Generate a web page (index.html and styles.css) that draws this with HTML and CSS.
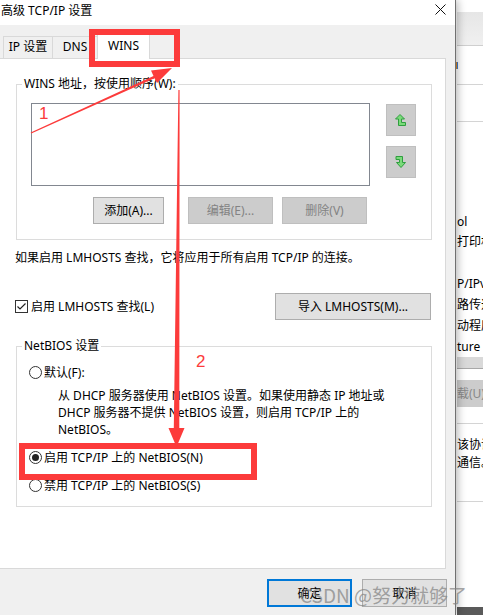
FILE: index.html
```html
<!DOCTYPE html>
<html lang="zh-CN">
<head>
<meta charset="utf-8">
<title>高级 TCP/IP 设置</title>
<link rel="stylesheet" href="styles.css">
</head>
<body>
<div class="screen">
  <div class="dialog">
    <div class="titlebar">
      <span class="title">高级 TCP/IP 设置</span>
      <svg class="close" width="11" height="11" viewBox="0 0 11 11"><path d="M0.5 0.5L10.5 10.5M10.5 0.5L0.5 10.5" stroke="#111" stroke-width="1" fill="none"/></svg>
    </div>
    <div class="tabbar">
      <div class="tab tab-ip">IP 设置</div>
      <div class="tab tab-dns">DNS</div>
      <div class="tab tab-wins active">WINS</div>
    </div>
    <div class="panel">
      <fieldset class="group group-wins">
        <legend>WINS 地址，按使用顺序(W):</legend>
        <div class="list-row">
          <div class="listbox"></div>
          <div class="order-btns">
            <div class="order-btn">
              <svg width="12" height="12" viewBox="0 0 12 12"><polygon points="5,0.5 9.5,5 6.5,5 6.5,8.5 10.5,8.5 10.5,11.5 3.5,11.5 3.5,5 0.5,5" fill="#7ada7a" stroke="#2f9e3f" stroke-width="1" stroke-linejoin="miter"/></svg>
            </div>
            <div class="order-btn">
              <svg width="12" height="12" viewBox="0 0 12 12"><polygon points="1,0.5 7.5,0.5 7.5,6.5 10.5,6.5 6,11.5 1.5,6.5 4.5,6.5 4.5,3.5 1,3.5" fill="#7ada7a" stroke="#2f9e3f" stroke-width="1" stroke-linejoin="miter"/></svg>
            </div>
          </div>
        </div>
        <div class="btn-row">
          <div class="btn btn-add">添加(A)...</div>
          <div class="btn disabled btn-edit">编辑(E)...</div>
          <div class="btn disabled btn-del">删除(V)</div>
        </div>
      </fieldset>
      <p class="note">如果启用 LMHOSTS 查找，它将应用于所有启用 TCP/IP 的连接。</p>
      <div class="lm-row">
        <div class="check">
          <span class="checkbox"><svg width="11" height="11" viewBox="0 0 11 11"><path d="M1.5 5.5L4 8L9.5 2.5" stroke="#222" stroke-width="1.2" fill="none"/></svg></span>
          <span>启用 LMHOSTS 查找(L)</span>
        </div>
        <div class="btn btn-import">导入 LMHOSTS(M)...</div>
      </div>
      <fieldset class="group group-netbios">
        <legend>NetBIOS 设置</legend>
        <div class="radio-row r-default"><span class="radio"></span><span>默认(F):</span></div>
        <p class="desc">从 DHCP 服务器使用 NetBIOS 设置。如果使用静态 IP 地址或<br>DHCP 服务器不提供 NetBIOS 设置，则启用 TCP/IP 上的<br>NetBIOS。</p>
        <div class="radio-row r-on"><span class="radio checked"></span><span>启用 TCP/IP 上的 NetBIOS(N)</span></div>
        <div class="radio-row r-off"><span class="radio"></span><span>禁用 TCP/IP 上的 NetBIOS(S)</span></div>
      </fieldset>
    </div>
    <div class="footer">
      <div class="btn btn-ok">确定</div>
      <div class="btn btn-cancel">取消</div>
    </div>
  </div>
  <div class="bgwin">
    <div class="bw-top"></div>
    <div class="bw-band"></div>
    <div class="bw-item bw-item1"><span class="bw-icon"></span></div>
    <div class="bw-item bw-item2"></div>
    <div class="bw-text bw-t1">ol<br>打印机</div>
    <div class="bw-text bw-t2">P/IPv4<br>路传递<br>动程序<br>ture</div>
    <div class="bw-grayband"></div>
    <div class="bw-btn">载(U)</div>
    <div class="bw-sep"></div>
    <div class="bw-text bw-t3">该协议<br>通信。</div>
    <div class="bw-sep2"></div>
    <div class="bw-bottom"></div>
  </div>
</div>
<svg class="annot" width="483" height="615" viewBox="0 0 483 615">
  <rect x="92" y="32" width="85" height="32" fill="none" stroke="#fc3b3b" stroke-width="6"/>
  <rect x="22" y="446" width="232" height="31" fill="none" stroke="#fc3b3b" stroke-width="6"/>
  <polygon points="30.7,132.4 153.5,76 151,70.5 172,68 157,83 154.5,78.2 31.3,133.6" fill="#fc3b3b"/>
  <polygon points="178.4,90 179.6,90 179.3,428 184.5,428 176.5,447 168.5,428 173.8,428" fill="#fc3b3b"/>
  <text x="39" y="119" class="num">1</text>
  <text x="196" y="367" class="num">2</text>
</svg>
<div class="watermark">CSDN @努力就够了</div>
</body>
</html>
```

FILE: styles.css
```css
* { box-sizing: border-box; }
html, body { margin: 0; padding: 0; }
body {
  width: 483px;
  height: 615px;
  overflow: hidden;
  position: relative;
  background: #f0f0f0;
  font-family: "Noto Sans", "Noto Sans CJK SC", sans-serif;
  font-size: 12px;
  color: #000;
}
.screen { display: flex; width: 483px; height: 615px; }

.dialog {
  width: 456px;
  flex: none;
  background: #f0f0f0;
  border-right: 1px solid #707070;
  display: flex;
  flex-direction: column;
  box-shadow: 2px 0 8px rgba(0,0,0,0.28);
  position: relative;
  z-index: 1;
}
.titlebar {
  height: 25px;
  background: #fff;
  display: flex;
  align-items: flex-start;
  padding-left: 1px;
}
.title { line-height: 17px; margin-top: 2px; }
.close { margin-left: auto; margin-right: 9px; margin-top: 4px; }

.tabbar {
  height: 33px;
  display: flex;
  align-items: flex-end;
  padding-left: 3px;
}
.tab {
  height: 22px;
  border: 1px solid #d9d9d9;
  border-bottom: none;
  background: #f0f0f0;
  text-align: center;
  line-height: 20px;
}
.tab-ip { width: 50px; }
.tab-dns { width: 46px; margin-left: -1px; }
.tab-wins.active {
  width: 53px;
  margin-left: -1px;
  height: 26px;
  margin-bottom: -1px;
  background: #fff;
  padding-top: 2px;
  position: relative;
  z-index: 1;
}

.panel {
  width: 446px;
  height: 511px;
  background: #fff;
  border: 1px solid #d9d9d9;
  border-left: none;
  flex: none;
}

.group {
  margin: 0;
  padding: 0;
  border: 1px solid #dcdcdc;
  width: 416px;
  min-width: 0;
}
.group legend {
  margin-left: 5px;
  padding: 0 2px;
  line-height: 16px;
}
.group-wins { margin: 17px 0 0 16px; padding-bottom: 15px; }
.list-row { display: flex; margin: 11px 0 0 14px; }
.listbox {
  width: 339px;
  height: 83px;
  border: 1px solid #828790;
  background: #fff;
}
.order-btns {
  display: flex;
  flex-direction: column;
  gap: 10px;
  margin: 1px 0 0 16px;
}
.order-btn {
  width: 30px;
  height: 32px;
  background: #cccccc;
  border: 1px solid #bfbfbf;
  display: flex;
  align-items: center;
  justify-content: center;
}
.btn-row { display: flex; margin: 11px 0 0 76px; }
.btn {
  height: 27px;
  border: 1px solid #adadad;
  background: #e1e1e1;
  display: flex;
  align-items: center;
  justify-content: center;
  line-height: 17px;
  flex: none;
}
.btn.disabled { background: #cccccc; border-color: #bfbfbf; color: #838383; }
.btn-add { width: 71px; }
.btn-edit { width: 85px; margin-left: 24px; }
.btn-del { width: 85px; margin-left: 9px; }

.note { margin: 9px 0 0 15px; line-height: 17px; }
.lm-row {
  display: flex;
  align-items: center;
  justify-content: space-between;
  margin: 27px 0 0 15px;
  width: 416px;
}
.check { display: flex; align-items: center; gap: 3px; line-height: 17px; }
.checkbox {
  width: 13px;
  height: 13px;
  border: 1px solid #333;
  background: #fff;
  display: flex;
  align-items: center;
  justify-content: center;
}
.btn-import { width: 156px; }

.group-netbios { margin: 18px 0 0 16px; padding-bottom: 12px; }
.radio-row {
  display: flex;
  align-items: center;
  gap: 2px;
  height: 17px;
  margin-left: 12px;
  line-height: 17px;
}
.r-default { margin-top: 10px; }
.r-on { margin-top: 11px; }
.r-off { margin-top: 11px; }
.radio {
  width: 13px;
  height: 13px;
  border: 1px solid #333;
  border-radius: 50%;
  background: #fff;
  display: flex;
  align-items: center;
  justify-content: center;
  flex: none;
}
.radio.checked::after {
  content: "";
  width: 7px;
  height: 7px;
  border-radius: 50%;
  background: #222;
}
.desc { margin: 6px 0 0 41px; line-height: 17px; }

.footer {
  display: flex;
  justify-content: flex-end;
  gap: 10px;
  margin-top: 10px;
  padding-right: 8px;
}
.btn-ok, .btn-cancel { width: 85px; height: 28px; }
.btn-ok { border: 2px solid #0078d7; }

.bgwin {
  flex: 1;
  background: #fff;
  overflow: hidden;
  display: flex;
  flex-direction: column;
  white-space: nowrap;
  padding-left: 1px;
}
.bw-top { height: 12px; flex: none; }
.bw-band {
  height: 34px;
  flex: none;
  background: linear-gradient(#e6e6e6, #f0f0f0);
  border-bottom: 1px solid #cfcfcf;
}
.bw-item { flex: none; border-bottom: 1px solid #d4d4d4; }
.bw-item1 { height: 39px; padding-top: 51px; }
.bw-item1 { padding-top: 0; display: flex; align-items: center; }
.bw-icon { width: 2px; height: 7px; background: #d88a2a; border-right: 1px solid #3a7bd5; margin-left: -1px; }
.bw-item2 { height: 37px; }
.bw-text { flex: none; line-height: 20px; }
.bw-t1 { margin-top: 90px; }
.bw-t2 { margin-top: 21px; line-height: 21px; }
.bw-grayband { height: 12px; flex: none; background: #d9d9d9; border-bottom: 1px solid #a8a8a8; margin-top: 0; }
.bw-btn {
  flex: none;
  height: 27px;
  margin-top: 11px;
  background: #cccccc;
  color: #888;
  line-height: 27px;
}
.bw-sep { height: 1px; flex: none; background: #d4d4d4; margin-top: 16px; }
.bw-t3 { margin-top: 12px; line-height: 18px; }
.bw-sep2 { height: 1px; flex: none; background: #d4d4d4; margin-top: 29px; }
.bw-bottom { margin-top: auto; height: 8px; flex: none; background: #5a5a5a; }

.annot {
  position: absolute;
  left: 0;
  top: 0;
  z-index: 2;
  pointer-events: none;
}
.num {
  font-family: "Liberation Sans", "Noto Sans", sans-serif;
  font-size: 17px;
  fill: #fc3b3b;
}
.watermark {
  position: absolute;
  left: 300px;
  top: 583px;
  z-index: 3;
  font-family: "Noto Sans CJK SC", sans-serif;
  font-size: 19px;
  line-height: 24px;
  color: rgba(128,128,128,0.7);
  white-space: nowrap;
}
```
